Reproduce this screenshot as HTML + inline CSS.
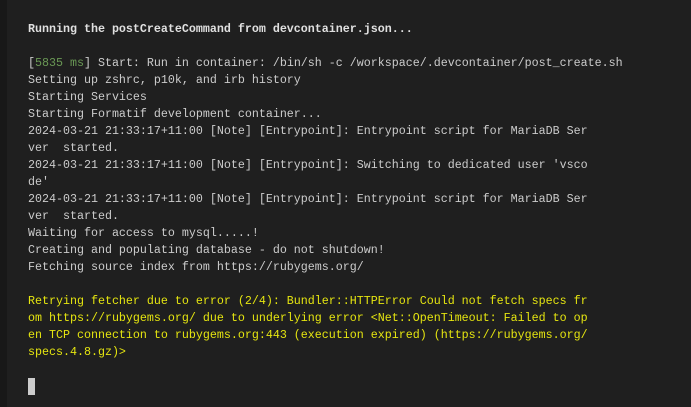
<!DOCTYPE html>
<html><head><style>
html,body{margin:0;padding:0;}
body{width:691px;height:407px;background:#1f1f1f;overflow:hidden;position:relative;}
.strip{position:absolute;left:0;top:0;width:7px;height:407px;background:#181818;}
pre{position:absolute;left:28px;top:21px;margin:0;font-family:"Liberation Mono",monospace;font-size:11.67px;line-height:17px;color:#cccccc;white-space:pre;}
.b{font-weight:bold;color:#e0e0e0}
.g{color:#6a9955}
.y{color:#e5e510}
.cur{display:inline-block;width:7px;height:17px;background:#cccccc;vertical-align:top;}
</style></head><body>
<div class="strip"></div>
<pre><span class="b">Running the postCreateCommand from devcontainer.json...</span>

[<span class="g">5835 ms</span>] Start: Run in container: /bin/sh -c /workspace/.devcontainer/post_create.sh
Setting up zshrc, p10k, and irb history
Starting Services
Starting Formatif development container...
2024-03-21 21:33:17+11:00 [Note] [Entrypoint]: Entrypoint script for MariaDB Ser
ver  started.
2024-03-21 21:33:17+11:00 [Note] [Entrypoint]: Switching to dedicated user 'vsco
de'
2024-03-21 21:33:17+11:00 [Note] [Entrypoint]: Entrypoint script for MariaDB Ser
ver  started.
Waiting for access to mysql.....!
Creating and populating database - do not shutdown!
Fetching source index from https://rubygems.org/

<span class="y">Retrying fetcher due to error (2/4): Bundler::HTTPError Could not fetch specs fr
om https://rubygems.org/ due to underlying error &lt;Net::OpenTimeout: Failed to op
en TCP connection to rubygems.org:443 (execution expired) (https://rubygems.org/
specs.4.8.gz)&gt;</span>

<span class="cur"></span></pre>
</body></html>
